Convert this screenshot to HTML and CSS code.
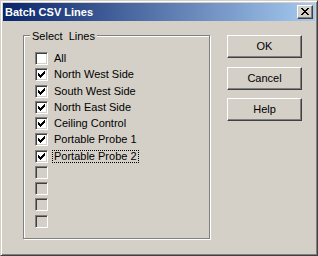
FILE: index.html
```html
<!DOCTYPE html>
<html>
<head>
<meta charset="utf-8">
<link rel="stylesheet" href="styles.css">
</head>
<body>
<div class="window">
  <div class="titlebar">
    <span class="title">Batch CSV Lines</span>
    <span class="close">
      <svg width="8" height="7" viewBox="0 0 8 7" shape-rendering="crispEdges">
        <path fill="#000" d="M0 0h2v1H0zM6 0h2v1H6zM1 1h2v1H1zM5 1h2v1H5zM2 2h4v1H2zM3 3h2v1H3zM2 4h4v1H2zM1 5h2v1H1zM5 5h2v1H5zM0 6h2v1H0zM6 6h2v1H6z"/>
      </svg>
    </span>
  </div>
  <div class="client">
    <div class="group">
      <span class="legend">Select&nbsp; Lines</span>
      <div class="list">
        <div class="row"><span class="box"></span><span class="label">All</span></div>
        <div class="row"><span class="box"><svg class="check" width="7" height="7" viewBox="0 0 7 7" shape-rendering="crispEdges"><path d="M6 0h1v3H6zM5 1h1v3H5zM4 2h1v3H4zM0 2h1v3H0zM1 3h1v3H1zM2 4h1v3H2zM3 3h1v3H3z"/></svg></span><span class="label">North West Side</span></div>
        <div class="row"><span class="box"><svg class="check" width="7" height="7" viewBox="0 0 7 7" shape-rendering="crispEdges"><path d="M6 0h1v3H6zM5 1h1v3H5zM4 2h1v3H4zM0 2h1v3H0zM1 3h1v3H1zM2 4h1v3H2zM3 3h1v3H3z"/></svg></span><span class="label">South West Side</span></div>
        <div class="row"><span class="box"><svg class="check" width="7" height="7" viewBox="0 0 7 7" shape-rendering="crispEdges"><path d="M6 0h1v3H6zM5 1h1v3H5zM4 2h1v3H4zM0 2h1v3H0zM1 3h1v3H1zM2 4h1v3H2zM3 3h1v3H3z"/></svg></span><span class="label">North East Side</span></div>
        <div class="row"><span class="box"><svg class="check" width="7" height="7" viewBox="0 0 7 7" shape-rendering="crispEdges"><path d="M6 0h1v3H6zM5 1h1v3H5zM4 2h1v3H4zM0 2h1v3H0zM1 3h1v3H1zM2 4h1v3H2zM3 3h1v3H3z"/></svg></span><span class="label">Ceiling Control</span></div>
        <div class="row"><span class="box"><svg class="check" width="7" height="7" viewBox="0 0 7 7" shape-rendering="crispEdges"><path d="M6 0h1v3H6zM5 1h1v3H5zM4 2h1v3H4zM0 2h1v3H0zM1 3h1v3H1zM2 4h1v3H2zM3 3h1v3H3z"/></svg></span><span class="label">Portable Probe 1</span></div>
        <div class="row"><span class="box"><svg class="check" width="7" height="7" viewBox="0 0 7 7" shape-rendering="crispEdges"><path d="M6 0h1v3H6zM5 1h1v3H5zM4 2h1v3H4zM0 2h1v3H0zM1 3h1v3H1zM2 4h1v3H2zM3 3h1v3H3z"/></svg></span><span class="label focus">Portable Probe 2</span></div>
        <div class="row"><span class="box disabled"></span></div>
        <div class="row"><span class="box disabled"></span></div>
        <div class="row"><span class="box disabled"></span></div>
        <div class="row"><span class="box disabled"></span></div>
      </div>
    </div>
    <div class="buttons">
      <div class="btn">OK</div>
      <div class="btn">Cancel</div>
      <div class="btn">Help</div>
    </div>
  </div>
</div>
</body>
</html>
```

FILE: styles.css
```css
html, body {
  margin: 0;
  padding: 0;
  background: #d4d0c8;
}

body {
  font-family: "Liberation Sans", Arial, sans-serif;
  font-size: 11px;
  color: #000;
}

.window {
  box-sizing: border-box;
  width: 318px;
  height: 256px;
  background: #d4d0c8;
  border: 1px solid;
  border-color: #d4d0c8 #404040 #404040 #d4d0c8;
  box-shadow: inset 1px 1px 0 #fff, inset -1px -1px 0 #808080;
  padding: 2px;
  display: flex;
  flex-direction: column;
}

.titlebar {
  height: 18px;
  flex: none;
  display: flex;
  align-items: center;
  justify-content: space-between;
  padding: 0 2px 0 2px;
  background: linear-gradient(to right, #0a246a, #a6caf0);
}

.title {
  color: #fff;
  font-weight: bold;
  font-size: 11px;
  line-height: 18px;
}

.close {
  box-sizing: border-box;
  width: 16px;
  height: 14px;
  background: #d4d0c8;
  border: 1px solid;
  border-color: #fff #404040 #404040 #fff;
  box-shadow: inset -1px -1px 0 #808080;
  padding: 2px 0 0 3px;
  display: flex;
  align-items: flex-start;
}

.close svg {
  display: block;
}

.client {
  flex: 1;
  display: flex;
  align-items: flex-start;
  padding: 14px 0 0 20px;
}

.group {
  box-sizing: border-box;
  width: 187px;
  height: 204px;
  border: 1px solid #808080;
  box-shadow: 1px 1px 0 #fff, inset 1px 1px 0 #fff;
  padding: 0 0 0 11px;
  display: flex;
  flex-direction: column;
  align-items: flex-start;
}

.legend {
  display: block;
  margin: -6px 0 0 -5px;
  padding: 0 2px;
  line-height: 13px;
  background: #d4d0c8;
}

.list {
  margin-top: 9px;
  display: grid;
  grid-auto-rows: 16.25px;
}

.row {
  display: flex;
  align-items: flex-start;
}

.box {
  box-sizing: border-box;
  width: 13px;
  height: 13px;
  flex: none;
  background: #fff;
  border: 1px solid;
  border-color: #808080 #fff #fff #808080;
  box-shadow: inset 1px 1px 0 #404040, inset -1px -1px 0 #d4d0c8;
  padding: 2px;
}

.box.disabled {
  background: #d4d0c8;
}

.check {
  display: block;
  fill: #000;
}

.label {
  margin-left: 4px;
  padding: 0 1px;
  border: 1px solid transparent;
  line-height: 11px;
  white-space: nowrap;
}

.label.focus {
  border: 1px dotted #000;
}

.buttons {
  margin-left: 17px;
  display: flex;
  flex-direction: column;
  gap: 8.5px;
}

.btn {
  box-sizing: border-box;
  width: 75px;
  height: 23px;
  border: 1px solid;
  border-color: #fff #404040 #404040 #fff;
  box-shadow: inset -1px -1px 0 #808080;
  display: flex;
  align-items: center;
  justify-content: center;
  line-height: 13px;
}
```
